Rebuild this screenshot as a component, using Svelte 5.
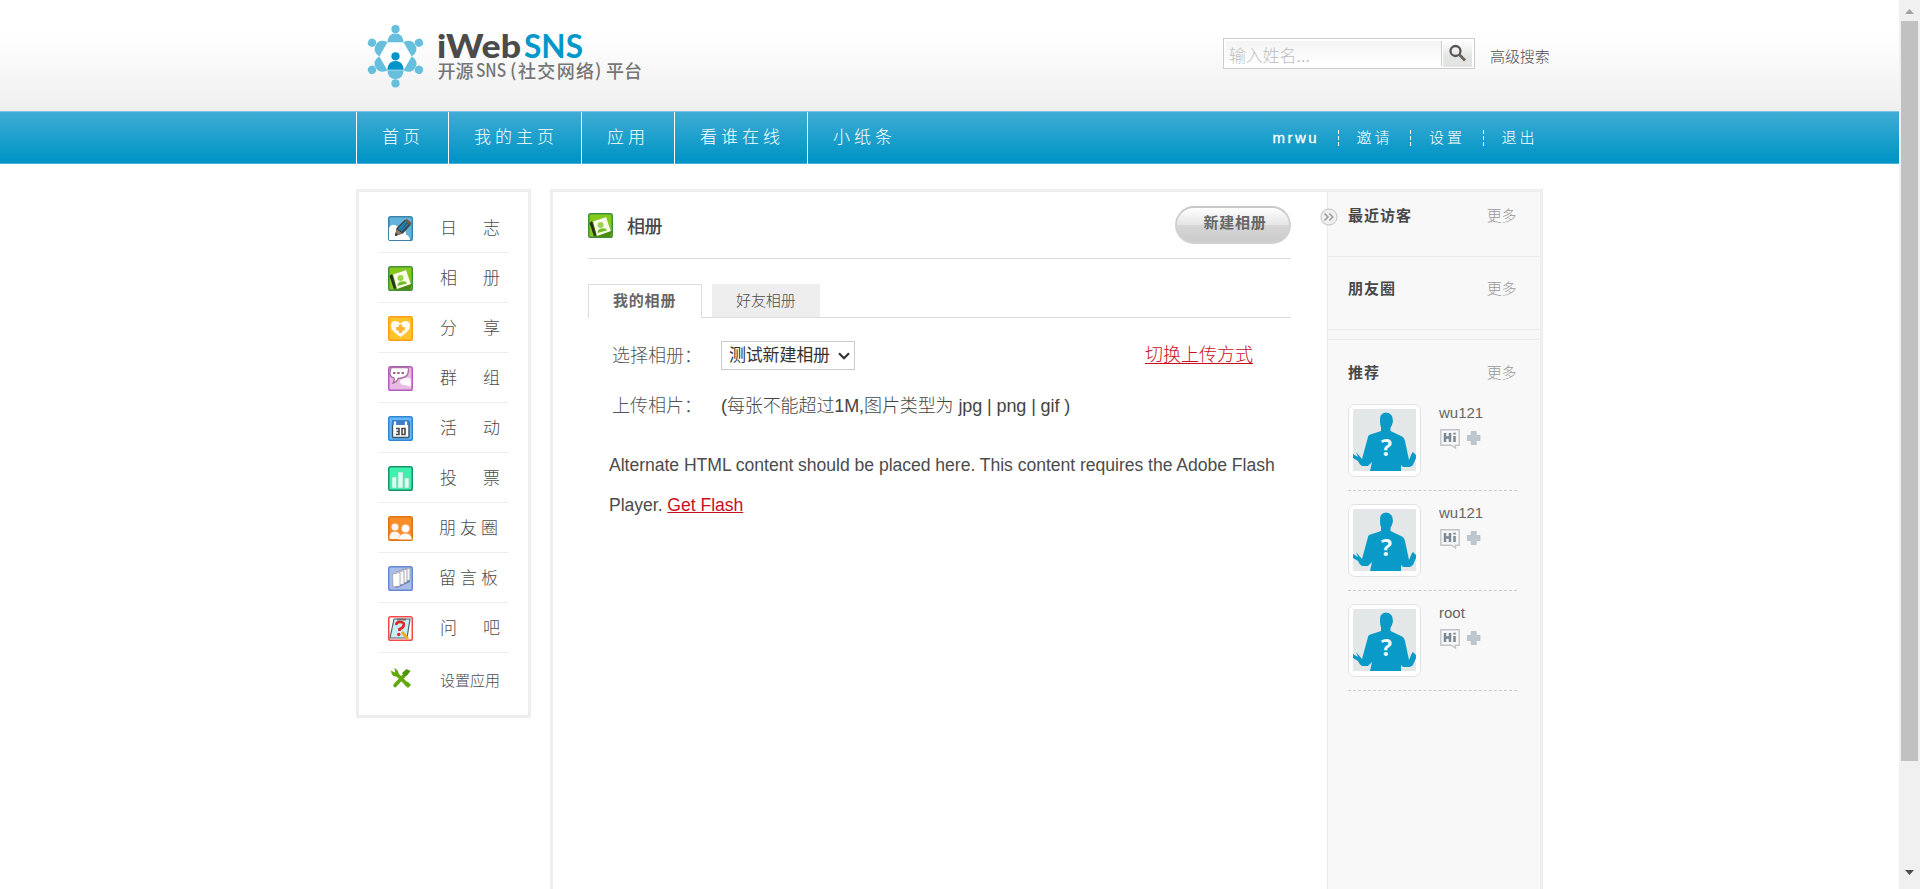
<script>
  const nav = [
    { text: '首页', w: 92 },
    { text: '我的主页', w: 133 },
    { text: '应用', w: 93 },
    { text: '看谁在线', w: 133 },
    { text: '小纸条', w: 120 }
  ];
  const account = ['mrwu', '邀请', '设置', '退出'];
  const apps = [
    { icon: 'diary', text: '日志', kind: 'two' },
    { icon: 'album', text: '相册', kind: 'two' },
    { icon: 'share', text: '分享', kind: 'two' },
    { icon: 'group', text: '群组', kind: 'two' },
    { icon: 'event', text: '活动', kind: 'two' },
    { icon: 'poll', text: '投票', kind: 'two' },
    { icon: 'friends', text: '朋友圈', kind: 'three' },
    { icon: 'board', text: '留言板', kind: 'three' },
    { icon: 'ask', text: '问吧', kind: 'two' },
    { icon: 'tools', text: '设置应用', kind: 'small' }
  ];
  const people = ['wu121', 'wu121', 'root'];
</script>

{#snippet frame(fill, stroke)}
  <rect x=".75" y=".75" width="23.5" height="23.5" rx="1.8" {fill} {stroke} stroke-width="1.5" />
{/snippet}

{#snippet appIcon(name)}
  <svg class="icon" width="25" height="25" viewBox="0 0 25 25">
    {#if name === 'diary'}
      {@render frame('#63b4dc', '#3b83ab')}
      <path d="M1 12Q3 8 7 9Q12 11 13 15Q18 12 18 19Q21 19 22 24H1Z" fill="#fff" />
      <path d="M7 20L8.500 12L17 3.500L23 8.500L15 17.500Z" fill="#3b4248" />
      <path d="M10 12.500L17.500 5L19 6.500L12 14.500Z" fill="#1c83b4" />
      <path d="M13 15L20 8" stroke="#1c83b4" stroke-width="1.600" />
      <path d="M16.500 4.500L19 3L23.500 7L22 9.500Z" fill="#6d5a4c" />
      <path d="M7 20L8.500 13L14.500 17.500Z" fill="#8c7a6e" />
      <path d="M7 20L7.600 17L9.800 18.800Z" fill="#222" />
    {:else if name === 'album'}
      {@render frame('#86c91d', '#43903a')}
      <path d="M2 10L6 24H22L24 19L17 4Z" fill="#4d8a12" />
      <path d="M1.500 10L4 8L8 22L6 23Z" fill="#263019" />
      <path d="M5 8.500L18 4Q20 10 23 18L9 23Z" fill="#fbfce9" />
      <circle cx="12.500" cy="12" r="3" fill="#9bd351" />
      <path d="M9.500 20Q9.500 15.500 14 15.500Q18 14.500 19 17.500Z" fill="#70bd28" />
    {:else if name === 'share'}
      {@render frame('#ffc32a', '#ff9d19')}
      <path d="M12.500 21Q3 15 3 10Q3 5 7.500 5Q10.500 5 12.500 7.500Q14.500 5 17.500 5Q22 5 22 10Q22 15 12.500 21Z" fill="#fffdf5" />
      <path d="M12.500 8.500V17M8.200 12.800H16.800" stroke="#ffb42b" stroke-width="3.400" />
    {:else if name === 'group'}
      {@render frame('#e8b9e2', '#b45bc3')}
      <path d="M12 15Q13 12 17 12Q23 11 23 15V20Q19 21 18 19Q12 20 12 15Z" fill="#fff6fd" />
      <path d="M3 1.500H20Q21 3 20 7Q19 12 10 12.500Q9 16 5 17Q7 14 6 12Q1.500 11 2 6Z" fill="#fff" stroke="#a8709f" stroke-width="1.300" />
      <path d="M5 7H7.500M9.200 7H11.700M13.500 7H16" stroke="#9f668f" stroke-width="2.200" />
    {:else if name === 'event'}
      {@render frame('#67b9fa', '#2f86d3')}
      <rect x="4.500" y="5" width="16.500" height="16.500" rx="1" fill="#fff" stroke="#38536c" stroke-width="1.400" />
      <path d="M4 4H21V9H4Z" fill="#3d7ed0" />
      <path d="M7 5.500V9M18 5.500V9" stroke="#fff" stroke-width="2.200" />
      <path d="M8 12.500H11V18.500H8M8.500 15.500H11M14 12.500H17V18.500H14Z" fill="none" stroke="#4a4a4a" stroke-width="1.600" />
    {:else if name === 'poll'}
      {@render frame('#3ff0ae', '#17936a')}
      <path d="M4 11H8.500V22H4ZM10 6H15V22H10ZM16.500 12H21V22H16.500Z" fill="#dcfff2" stroke="#7ed9b8" stroke-width=".6" />
    {:else if name === 'friends'}
      {@render frame('#f98d2a', '#dd7516')}
      <circle cx="7" cy="11" r="3.500" fill="#fff4ef" />
      <path d="M1.500 23Q1 15.500 7 15.500Q12 16 12 20V23Z" fill="#fff4ef" />
      <circle cx="17.500" cy="12.500" r="4" fill="#fff" stroke="#f7b48a" stroke-width=".5" />
      <path d="M10.500 23.500Q11 17.500 17.500 17.500Q23.500 17.500 23.800 23.500Z" fill="#fff" stroke="#f7b48a" stroke-width=".5" />
    {:else if name === 'board'}
      {@render frame('#aabce9', '#6688d8')}
      <path d="M4 20L9 22L22 16V9Z" fill="#6d7fae" />
      <path d="M14 3.500L22 2V14L15 16Z" fill="#f3f3f3" stroke="#8f94a6" stroke-width=".7" />
      <path d="M11 4.700L19 3.200V16L12 18Z" fill="#f8f8f8" stroke="#8f94a6" stroke-width=".7" />
      <path d="M8 6L16 4.800V18L9 19.500Z" fill="#f8f8f8" stroke="#8f94a6" stroke-width=".7" />
      <path d="M4.500 8L12 6.500V20L5 21Z" fill="#fff" stroke="#8f94a6" stroke-width=".7" />
    {:else if name === 'ask'}
      {@render frame('#fff', '#f34848')}
      <path d="M2 22L6 3L22 3L19 22Z" fill="#c7edf5" stroke="#54616d" stroke-width="1.200" />
      <path d="M9 2.500H18V4.500H9Z" fill="#6f6f6f" />
      <path d="M8 9Q8.500 5.500 12.500 6Q17 6 15.500 10Q14.500 12.500 11.500 13V15" fill="none" stroke="#e22424" stroke-width="2.600" />
      <circle cx="10.800" cy="18.500" r="1.700" fill="#e22424" />
      <path d="M14 16L20 23" stroke="#f1a91e" stroke-width="2.800" />
    {:else}
      <path d="M8 7.500L19 18.500M7 19.500L17 8.500" stroke="#61a80d" stroke-width="3.600" stroke-linecap="round" />
      <path d="M4 6Q4.500 10.500 9 9.500Q11 6 7.500 3.500L8 6.500L6.500 7.500Z" fill="#61a80d" stroke="#61a80d" stroke-width="1.500" />
      <path d="M14 7L18.500 3L22.500 5L19 9.500L16.500 10Z" fill="#4e9408" />
      <path d="M18 17L21.500 20.500" stroke="#61a80d" stroke-width="4.400" />
    {/if}
  </svg>
{/snippet}

<div class="screen">
  <div class="page">
    <header>
      <div class="wrap head">
        <svg class="logo" width="310" height="111" viewBox="356 0 310 111">
          <path d="M385 41H406L417 57L406 73H385L374 57Z" fill="#fff" />
          {#each [0, 60, 120, 180, 240, 300] as a}
            <g transform={`rotate(${a} 395.500 56.300)`} fill="#66bfdd">
              <circle cx="395.500" cy="29.200" r="4.100" />
              <path d="M387.300 42.300Q388 33.500 395.500 33.500Q403 33.500 403.700 42.300Z" />
            </g>
          {/each}
          <circle cx="395.500" cy="56.300" r="4.100" fill="#0094c8" />
          <path d="M387.300 69.800Q388 61 395.500 61Q403 61 403.700 69.800Z" fill="#0094c8" />
          <text class="brand" x="437" y="58" textLength="84" lengthAdjust="spacingAndGlyphs" fill="#4b4b4b">iWeb</text>
          <text class="brand sns" x="524" y="58" textLength="59" lengthAdjust="spacingAndGlyphs" fill="#0098ca">SNS</text>
          <text class="slogan" x="437.500" y="77.500" textLength="36" lengthAdjust="spacingAndGlyphs">开源</text>
          <text class="slogan" x="476" y="77" textLength="30" lengthAdjust="spacingAndGlyphs">SNS</text>
          <text class="slogan" x="510" y="77">(</text>
          <text class="slogan" x="518" y="77.500" textLength="76" lengthAdjust="spacing">社交网络</text>
          <text class="slogan" x="595" y="77">)</text>
          <text class="slogan" x="606" y="77.500" textLength="36" lengthAdjust="spacing">平台</text>
        </svg>
        <div class="find">
          <div class="search">
            <span class="ph">输入姓名...</span>
            <span class="go">
              <svg width="29" height="26" viewBox="0 0 29 26">
                <circle cx="12.500" cy="10" r="5" fill="none" stroke="#555" stroke-width="2.300" />
                <path d="M16.500 13.800L22 19.500" stroke="#6b6157" stroke-width="2.900" />
              </svg>
            </span>
          </div>
          <span class="adv">高级搜索</span>
        </div>
      </div>
    </header>

    <nav>
      <div class="wrap bar">
        {#each nav as n}
          <a class="tab" style:width={n.w + 'px'}>{n.text}</a>
        {/each}
        <div class="account">
          {#each account as a, i}
            <a class:user={i === 0}>{a}</a>
          {/each}
        </div>
      </div>
    </nav>

    <div class="wrap cols">
      <aside class="side">
        {#each apps as a}
          <div class="app">
            {@render appIcon(a.icon)}
            <span class={a.kind}>{a.text}</span>
          </div>
        {/each}
      </aside>

      <div class="frame">
        <main>
          <div class="title">
            {@render appIcon('album')}
            <h1>相册</h1>
            <button>新建相册</button>
          </div>
          <div class="tabs">
            <span class="on">我的相册</span>
            <span class="off">好友相册</span>
          </div>
          <div class="row pick">
            <span class="label">选择相册：</span>
            <div class="select">
              <span>测试新建相册</span>
              <svg width="12" height="8" viewBox="0 0 12 8"><path d="M1 1.200L6 6.200L11 1.200" fill="none" stroke="#333" stroke-width="2.200" /></svg>
            </div>
            <a class="switch">切换上传方式</a>
          </div>
          <div class="row up">
            <span class="label">上传相片：</span>
            <span class="hint">(每张不能超过1M,图片类型为 jpg | png | gif )</span>
          </div>
          <p>Alternate HTML content should be placed here. This content requires the Adobe Flash<br />Player. <a>Get Flash</a></p>
        </main>

        <aside class="right">
          <svg class="toggle" width="18" height="18" viewBox="0 0 18 18">
            <circle cx="9" cy="9" r="8" fill="#f1f1f1" stroke="#cfcfcf" stroke-width="1.300" />
            <path d="M4.500 5.500L8 9L4.500 12.500M9.300 5.500L12.800 9L9.300 12.500" fill="none" stroke="#969da3" stroke-width="1.600" />
          </svg>
          <section class="s1"><h2>最近访客</h2><a>更多</a></section>
          <section class="s2"><h2>朋友圈</h2><a>更多</a></section>
          <div class="gap"></div>
          <section class="s3"><h2>推荐</h2><a>更多</a></section>
          {#each people as p}
            <div class="person">
              <div class="pic">
                <svg width="63" height="62" viewBox="0 0 63 62">
                  <rect width="63" height="62" fill="#e4e7e7" />
                  <path d="M27 12Q26 4 33 3.500Q40 4 40 12Q39 17 37.500 18.500V22L48 27Q51 28 52 32L56 51L59 44L56 47L58 45L60 43L63 46V49L60 56L57 58H50L48 56V62H17L19 53L15 57H9Q6 55 5 52L0 49V45L5 48L3 43L9 50L15 28Q15 26 19 25L28 22V18Q27 16 27 12Z" fill="#0a9ac8" />
                  <text x="33.500" y="47" text-anchor="middle" fill="#eefaff" font-family="Open Sans, sans-serif" font-weight="700" font-size="23">?</text>
                </svg>
              </div>
              <div class="info">
                <span>{p}</span>
                <svg width="42" height="20" viewBox="0 0 42 20">
                  <path d="M.8 .8H19.200V16.200H15.500V19L11.500 16.200H.8Z" fill="#f7f7f7" stroke="#c2c5c7" stroke-width="1.400" />
                  <path d="M5 4V13M10 4V13M5 8.500H10M14.500 7V13M14.500 3.800V5.500" stroke="#7b8791" stroke-width="2.500" />
                  <path d="M31.200 2.500H36.200V6.500H40V11.500H36.200V15.500H31.200V11.500H27.400V6.500H31.200Z" fill="#bdc7d0" stroke="#aeb8c1" stroke-width=".7" />
                </svg>
              </div>
            </div>
          {/each}
        </aside>
      </div>
    </div>
  </div>

  <div class="scroll">
    <svg width="9" height="5" viewBox="0 0 9 5"><path d="M0 5L4.500 0L9 5Z" fill="#a3a3a3" /></svg>
    <div class="thumb"></div>
    <svg class="down" width="9" height="5" viewBox="0 0 9 5"><path d="M0 0L4.500 5L9 0Z" fill="#505050" /></svg>
  </div>
</div>

<style>
  :global(body) { margin: 0; overflow: hidden; background: #fff; }
  * { box-sizing: border-box; }
  .screen {
    display: flex; height: 889px; width: 1920px; overflow: hidden;
    font-family: "Liberation Sans", "Noto Sans CJK SC", sans-serif;
    color: #4c4c4c; white-space: nowrap;
  }
  .page { width: 1899px; height: 889px; overflow: hidden; }
  .wrap { width: 1187px; margin-left: 356px; }
  svg { display: block; flex: none; }

  header { height: 111px; background: linear-gradient(#fff 0, #fff 32px, #efefef 111px); }
  .head { display: flex; justify-content: space-between; }
  .brand { font: 900 33px Lato, sans-serif; }
  .sns { font-weight: 700; }
  .slogan { font: 500 18px "Noto Sans CJK SC", sans-serif; fill: #757575; }
  .find { display: flex; padding-top: 38px; width: 320px; }
  .search { width: 252px; height: 31px; border: 1px solid #ccc; background: #fff; display: flex; padding: 2px; }
  .ph {
    width: 217px; border-right: 1px solid #ccc; background: linear-gradient(#f4f4f4, #fff);
    color: #bebebe; font-size: 17px; font-weight: 300; line-height: 31px; padding-left: 3px; letter-spacing: -.2px;
  }
  .go { width: 29px; height: 26px; margin-left: 1px; background: linear-gradient(#fff, #e3e5e3 60%); }
  .adv { font-size: 15px; line-height: 37px; margin-left: 15px; letter-spacing: -.1px; font-weight: 300; }

  nav { height: 53px; border-top: 1px solid #7bc5df; border-bottom: 1px solid #49b0d5; background: linear-gradient(#3facd3, #0095c6 94%); }
  .bar { display: flex; color: #fff; height: 52px; }
  .tab { border-left: 1px solid #fff; padding-left: 25px; font-size: 17px; letter-spacing: 4px; line-height: 51px; font-weight: 300; }
  .account { margin-left: auto; margin-right: -12px; display: flex; align-items: center; height: 51px; }
  .account a {
    font-size: 15px; letter-spacing: 3px; width: 72.500px; padding-left: 19px; line-height: 16px; font-weight: 300;
    background: repeating-linear-gradient(#fff 0 4px, transparent 4px 6px) left / 1px 100% no-repeat;
  }
  .account .user { background: none; width: 84px; font-weight: 400; letter-spacing: 2.500px; -webkit-text-stroke: .3px #fff; }

  .cols { display: flex; justify-content: space-between; padding-top: 25px; }
  .side { width: 175px; height: 529px; border: 3px solid #eee; padding: 11px 20px 0 19px; }
  .app { height: 50px; border-bottom: 1px solid #eee; display: flex; padding: 13px 0 0 10px; line-height: 25px; color: #4c4c4c; font-weight: 300; }
  .app:last-child { border: 0; }
  .app span { margin-left: 27px; font-size: 17px; }
  .app .two { letter-spacing: 26px; }
  .app .three { letter-spacing: 4px; margin-left: 26px; }
  .app .small { font-size: 15px; line-height: 29px; }

  .frame { width: 993px; height: 800px; border: 3px solid #eee; display: flex; }
  main { width: 774px; padding-left: 35px; }
  .title { width: 703px; height: 67px; border-bottom: 1px solid #ddd; display: flex; padding-top: 14px; }
  .title .icon { margin-top: 7px; }
  h1 { font-size: 18px; font-weight: 500; margin: 0 0 0 14px; line-height: 43px; height: 43px; color: #484848; letter-spacing: -.4px; }
  button {
    margin-left: auto; width: 116px; height: 38px; border: 2px solid #d1d1d1; border-top-color: #c8c8c8; border-radius: 19px;
    background: linear-gradient(#fff, #e4e4e4 50%, #d6d6d6 51%, #cbcbcb); color: #666;
    font: 700 15px/26px "Noto Sans CJK SC", sans-serif; padding: 0 0 7px 4px; letter-spacing: .8px;
  }
  .tabs { width: 703px; height: 34px; margin-top: 25px; border-bottom: 1px solid #ddd; display: flex; font-size: 15px; }
  .on { width: 114px; height: 34px; border: 1px solid #ddd; border-bottom: 0; background: #fff; font-weight: 700; color: #666; line-height: 32px; padding-left: 24px; letter-spacing: .8px; }
  .off { width: 108px; height: 33px; margin-left: 10px; background: #eee; line-height: 33px; padding-left: 24px; letter-spacing: -.1px; font-weight: 300; }
  .row { display: flex; font-size: 18px; padding-left: 24px; font-weight: 300; }
  .pick { margin-top: 23px; height: 29px; width: 703px; }
  .label { width: 109px; line-height: 30px; color: #555; }
  .select { width: 134px; height: 29px; border: 1px solid #ccc; display: flex; align-items: center; font-size: 17px; color: #333; padding-left: 7px; gap: 8px; font-weight: 400; letter-spacing: -.2px; }
  .select span { line-height: 27px; height: 27px; }
  .switch { margin-left: 290px; line-height: 29px; }
  .switch, p a { color: #c7101f; text-decoration: underline; }
  .switch { text-underline-offset: 2px; }
  .up { margin-top: 21px; }
  .hint { line-height: 30px; color: #444; letter-spacing: -.1px; }
  p { margin: 24px 0 0 21px; font-size: 17.600px; line-height: 40px; color: #4c4c4c; letter-spacing: -.04px; }

  .right { width: 213px; background: #f8f8f8; border-left: 1px solid #eaeaea; position: relative; }
  .toggle { position: absolute; left: -8px; top: 16px; }
  section { display: flex; justify-content: space-between; padding: 0 24px 0 20px; font-size: 15px; border-bottom: 1px solid #ebebeb; line-height: 24px; }
  h2 { font-size: 15px; line-height: 24px; margin: 0; color: #484848; letter-spacing: 1px; }
  section a { color: #999; font-weight: 300; letter-spacing: -.4px; }
  .s1 { height: 65px; padding-top: 12px; }
  .s2 { height: 73px; padding-top: 20px; }
  .gap { height: 10px; border-bottom: 1px solid #ebebeb; }
  .s3 { height: 64px; padding-top: 21px; border: 0; }
  .person { width: 169px; height: 100px; margin-left: 20px; border-bottom: 1px dashed #ccc; display: flex; gap: 19px; }
  .s3 + .person { height: 87px; }
  .person + .person { padding-top: 13px; }
  .pic { width: 73px; height: 73px; border: 1px solid #e2e2e2; border-radius: 7px; background: #fff; padding: 4px; }
  .info { display: flex; flex-direction: column; color: #666; font-size: 15px; }
  .info span { line-height: 17px; height: 25px; margin-left: -1px; }

  .scroll { width: 21px; background: #f0f0f0; padding: 9px 0 14px; display: flex; flex-direction: column; align-items: center; }
  .thumb { width: 17px; height: 740px; background: #c1c1c1; margin-top: 7px; }
  .down { margin-top: auto; }
</style>
